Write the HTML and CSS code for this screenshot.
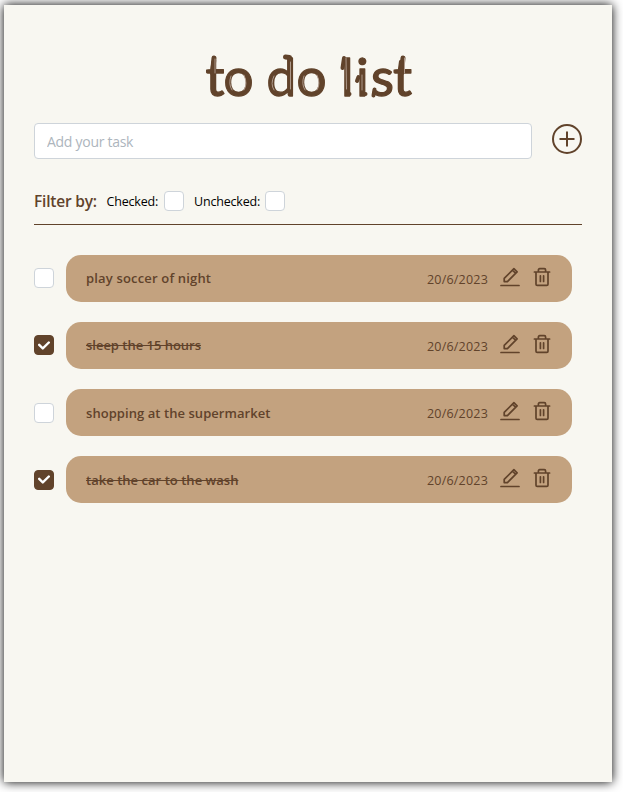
FILE: index.html
```html
<!DOCTYPE html>
<html lang="en">
<head>
<meta charset="utf-8">
<title>to do list</title>
<link rel="stylesheet" href="styles.css">
</head>
<body>
<svg width="0" height="0" class="defs">
  <symbol id="edit" viewBox="0 0 20 20"><path d="M1 18.500h18M4.200 14.600V11.400L13.900 1.700l3.200 3.200-9.700 9.700zM12.700 3.400l2.600 2.600"/></symbol>
  <symbol id="trash" viewBox="0 0 18 20"><path d="M1.400 5h15.200M3 5v12.200q0 1.200 1.200 1.200h9.600q1.200 0 1.200-1.200V5M5.400 4.800V2.900q0-1.200 1.300-1.200h4.600q1.300 0 1.300 1.200v1.900M7.400 8.800v5.600M10.600 8.800v5.600"/></symbol>
  <symbol id="check" viewBox="0 0 10 7"><path d="M4 4.586L1.707 2.293A1 1 0 1 0 .293 3.707l3 3a.997.997 0 0 0 1.414 0l5-5A1 1 0 1 0 8.293.293L4 4.586z"/></symbol>
</svg>
<main class="card">
  <h1 class="title">
    <svg class="lettering" width="212" height="50" viewBox="203 51 212 50">
      <text y="95.5" x="205.500 223.500 240 266.500 296.500 320 341 356 371 393">to do list</text>
      <path class="brush" d="M214 58l-1.500 15M289.500 57.500l-4-.5M403 58l-1.500 15"/>
      <path class="brush thin" d="M344 58l-1.500 10M347.500 94h2M358.500 77l-1.500 4M363.500 94h2M373.500 95.500l1-6"/>
      <path class="streak" d="M215 59v14M231 76q-3 8 1 14M244 75q4 9 0 15M290.500 62v27M274 76q-4 8 0 14M304 76q-3 8 1 14M317 75q4 9 0 15M346 58l.5 31M362 75v15M404.500 58v15"/>
    </svg>
  </h1>
  <form class="add">
    <input class="field" type="text" placeholder="Add your task">
    <svg class="plus" viewBox="0 0 30 30"><circle cx="15" cy="15" r="14"/><path d="M7.500 15h15M15 7.500v15"/></svg>
  </form>
  <div class="filters">
    <span class="filter-title">Filter by:</span>
    <span class="filter-label checked-label">Checked:</span><span class="box"></span>
    <span class="filter-label unchecked-label">Unchecked:</span><span class="box"></span>
  </div>
  <div class="tasks">
    <div class="task">
      <span class="box"></span>
      <div class="pill"><span class="name"><span class="n1">play soccer of night</span></span><span class="date">20/6/2023</span><svg class="edit"><use href="#edit"/></svg><svg class="trash"><use href="#trash"/></svg></div>
    </div>
    <div class="task">
      <span class="box on"><svg class="check"><use href="#check"/></svg></span>
      <div class="pill"><span class="name"><span class="n2 done">sleep the 15 hours</span></span><span class="date">20/6/2023</span><svg class="edit"><use href="#edit"/></svg><svg class="trash"><use href="#trash"/></svg></div>
    </div>
    <div class="task">
      <span class="box"></span>
      <div class="pill"><span class="name"><span class="n3">shopping at the supermarket</span></span><span class="date">20/6/2023</span><svg class="edit"><use href="#edit"/></svg><svg class="trash"><use href="#trash"/></svg></div>
    </div>
    <div class="task">
      <span class="box on"><svg class="check"><use href="#check"/></svg></span>
      <div class="pill"><span class="name"><span class="n4 done">take the car to the wash</span></span><span class="date">20/6/2023</span><svg class="edit"><use href="#edit"/></svg><svg class="trash"><use href="#trash"/></svg></div>
    </div>
  </div>
</main>
</body>
</html>
```
FILE: styles.css
```css
* { box-sizing: border-box; }
body { margin: 0; padding: 5px 11px 10px 4px; background: #fff; font-family: "Open Sans", "Noto Sans", sans-serif; overflow: hidden; }
.defs { display: block; }
.card { width: 608px; height: 777px; padding: 46px 30px 0; background: #f8f7f1; box-shadow: 0 0 10px #000; }
.title { margin: 0; height: 72px; display: flex; justify-content: center; font-weight: 500; }
.lettering { display: block; margin-left: 1px; overflow: visible; }
.lettering text { font-family: Lato, sans-serif; font-size: 53px; font-weight: 400; fill: #61432b; stroke: #61432b; stroke-width: 1.300; stroke-linejoin: round; }
.brush { fill: none; stroke: #61432b; stroke-width: 5; stroke-linecap: round; }
.thin { stroke-width: 4; }
.streak { fill: none; stroke: #b5a294; stroke-width: .9; stroke-linecap: round; }
.add { display: flex; height: 36px; margin: 0; gap: 20px; }
.field { width: 498px; height: 36px; border: 1px solid #ced4da; border-radius: 4px; padding: 1px 12px 0; background: #fff; font: 14px "Open Sans", sans-serif; letter-spacing: -.28px; outline: 0; }
.field::placeholder { color: #adb5bd; opacity: 1; }
.plus { width: 30px; height: 30px; margin-top: 1px; fill: none; stroke: #61432b; stroke-width: 2; }
.filters { display: flex; align-items: center; height: 66px; padding-top: 19px; border-bottom: 1px solid #61432b; white-space: nowrap; }
.filter-title { width: 72.500px; color: #61432b; font-size: 15.500px; font-weight: 600; letter-spacing: -.2px; }
.filter-label { font-size: 12.500px; letter-spacing: -.18px; color: #000; }
.checked-label { width: 57.500px; }
.unchecked-label { width: 71px; margin-left: 10px; }
.box { flex: none; width: 20px; height: 20px; display: flex; align-items: center; justify-content: center; border: 1px solid #ced4da; border-radius: 4px; background: #fff; }
.on { background: #61432b; border-color: #61432b; }
.check { width: 12px; height: 9px; fill: #fff; }
.tasks { padding-top: 29.800px; display: flex; flex-direction: column; gap: 20.200px; }
.task { display: flex; height: 47px; align-items: flex-start; gap: 12px; }
.task > .box { margin-top: 13.400px; }
.pill { width: 506px; height: 47px; padding: 0 20px; border-radius: 15px; background: #c3a27f; color: #61432b; display: flex; align-items: center; }
.name { width: 341px; font-size: 13px; line-height: 18px; font-weight: 600; white-space: nowrap; }
.n1 { letter-spacing: .17px; }
.n2 { letter-spacing: -.02px; }
.n3 { letter-spacing: .06px; }
.n4 { letter-spacing: .03px; }
.done { text-decoration: line-through; }
.date { width: 73px; padding-top: 2px; font-size: 12.500px; letter-spacing: .2px; font-weight: 500; white-space: nowrap; }
.edit { width: 20px; height: 20px; margin: -3px 13px 0 0; }
.trash { width: 18px; height: 20px; margin-top: -3px; }
.edit, .trash { flex: none; fill: none; stroke: #61432b; stroke-width: 1.700; stroke-linejoin: round; stroke-linecap: round; }
```
